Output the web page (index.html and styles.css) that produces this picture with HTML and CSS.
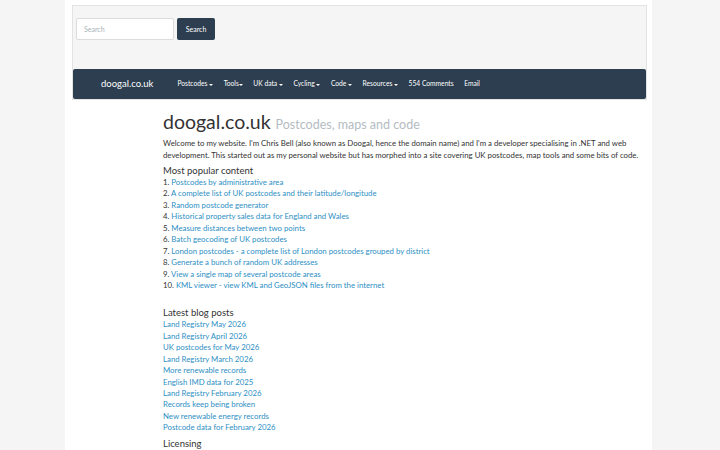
FILE: index.html
```html
<!DOCTYPE html>
<html lang="en">
<head>
    <meta charset="UTF-8">
    <title>doogal.co.uk</title>
    <link rel="stylesheet" href="styles.css">
</head>
<body>
    <div class="page">
        <!-- Cabecalho com busca e menu -->
        <div class="masthead">
            <form class="search-form">
                <input class="search-input" type="text" placeholder="Search">
                <button class="search-button" type="button">Search</button>
            </form>
            <nav class="navbar">
                <a class="brand" href="#">doogal.co.uk</a>
                <ul class="nav">
                    <li><a href="#">Postcodes <span class="caret"></span></a></li>
                    <li><a href="#">Tools<span class="caret"></span></a></li>
                    <li><a href="#">UK data <span class="caret"></span></a></li>
                    <li><a href="#">Cycling <span class="caret"></span></a></li>
                    <li><a href="#">Code <span class="caret"></span></a></li>
                    <li><a href="#">Resources <span class="caret"></span></a></li>
                    <li><a href="#">554 Comments</a></li>
                    <li><a href="#">Email</a></li>
                </ul>
            </nav>
        </div>

        <div class="content">
            <h1>doogal.co.uk <small>Postcodes, maps and code</small></h1>
            <p>Welcome to my website. I'm Chris Bell (also known as Doogal, hence the domain name) and I'm a developer specialising in .NET and web development. This started out as my personal website but has morphed into a site covering UK postcodes, map tools and some bits of code.</p>

            <h2>Most popular content</h2>
            <div class="popular">
                <div>1. <a href="#">Postcodes by administrative area</a></div>
                <div>2. <a href="#">A complete list of UK postcodes and their latitude/longitude</a></div>
                <div>3. <a href="#">Random postcode generator</a></div>
                <div>4. <a href="#">Historical property sales data for England and Wales</a></div>
                <div>5. <a href="#">Measure distances between two points</a></div>
                <div>6. <a href="#">Batch geocoding of UK postcodes</a></div>
                <div>7. <a href="#">London postcodes - a complete list of London postcodes grouped by district</a></div>
                <div>8. <a href="#">Generate a bunch of random UK addresses</a></div>
                <div>9. <a href="#">View a single map of several postcode areas</a></div>
                <div>10. <a href="#">KML viewer - view KML and GeoJSON files from the internet</a></div>
            </div>

            <h2 class="spaced">Latest blog posts</h2>
            <div class="posts">
                <a href="#">Land Registry May 2026</a>
                <a href="#">Land Registry April 2026</a>
                <a href="#">UK postcodes for May 2026</a>
                <a href="#">Land Registry March 2026</a>
                <a href="#">More renewable records</a>
                <a href="#">English IMD data for 2025</a>
                <a href="#">Land Registry February 2026</a>
                <a href="#">Records keep being broken</a>
                <a href="#">New renewable energy records</a>
                <a href="#">Postcode data for February 2026</a>
            </div>

            <h2>Licensing</h2>
        </div>
    </div>
</body>
</html>
```

FILE: styles.css
```css
* {
    margin: 0;
    padding: 0;
    box-sizing: border-box;
}

body {
    background-color: #f5f5f5;
    font-family: 'Lato', sans-serif;
    font-size: 7.8px;
    line-height: 11.43px;
    color: #333;
}

a {
    color: #2d8fc4;
    text-decoration: none;
}

/* Coluna branca central */
.page {
    width: 587px;
    min-height: 450px;
    margin-left: 65px;
    background-color: #fff;
    padding-top: 5px;
}

.masthead {
    margin: 0 5px 0 7px;
    height: 95px;
    background-color: #f5f5f5;
    border: 1px solid #e3e3e3;
    display: flex;
    flex-direction: column;
    justify-content: space-between;
}

.search-form {
    display: flex;
    gap: 3px;
    padding: 12px 0 0 3px;
}

.search-input {
    width: 98px;
    height: 22px;
    padding: 0 7px;
    border: 1px solid #dcdcdc;
    border-radius: 2px;
    background-color: #fff;
    font-family: 'Lato', sans-serif;
    font-size: 7px;
}

.search-input::placeholder {
    color: #aab2b8;
}

.search-button {
    width: 38px;
    height: 22px;
    border: none;
    border-radius: 2px;
    background-color: #2c3e50;
    color: #fff;
    font-family: 'Lato', sans-serif;
    font-size: 7px;
}

.navbar {
    height: 30px;
    background-color: #2c3e50;
    border-radius: 2px;
    display: flex;
    align-items: center;
    padding-left: 28px;
}

.brand {
    color: #fff;
    font-size: 9.5px;
    margin-right: 24px;
}

.nav {
    list-style: none;
    display: flex;
    gap: 10.5px;
}

.nav a {
    color: #fff;
    font-size: 6.7px;
}

.caret {
    display: inline-block;
    width: 0;
    height: 0;
    border-top: 2px solid #fff;
    border-left: 2px solid transparent;
    border-right: 2px solid transparent;
    vertical-align: middle;
}

/* Conteudo principal */
.content {
    padding: 10px 6px 0 98px;
}

h1 {
    font-size: 19.5px;
    font-weight: 400;
    line-height: 24px;
    color: #333;
}

h1 small {
    font-size: 12.5px;
    color: #b4bcc2;
}

.content p {
    line-height: 12px;
}

h2 {
    font-size: 9.5px;
    font-weight: 400;
    line-height: 13px;
    margin-top: 3px;
}

h2.spaced {
    margin-top: 15px;
}

.posts {
    display: flex;
    flex-direction: column;
}
```
